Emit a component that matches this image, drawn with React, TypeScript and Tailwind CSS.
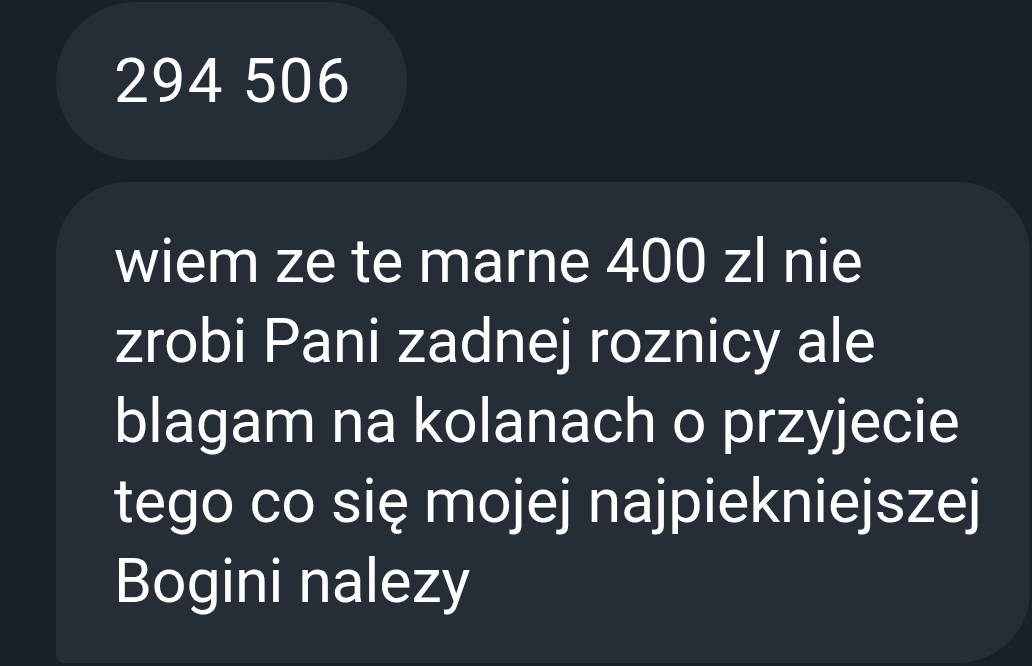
export default function App() {
  const lines = [
    'wiem ze te marne 400 zl nie',
    'zrobi Pani zadnej roznicy ale',
    'blagam na kolanach o przyjecie',
    'tego co się mojej najpiekniejszej',
    'Bogini nalezy',
  ]

  return (
    <div className="w-[1032px] h-[666px] overflow-hidden bg-[#18202a] pl-[56px] pt-[2px] font-['Roboto',sans-serif] text-white">
      {/* short message */}
      <div className="inline-flex h-[158px] items-center rounded-full bg-[#252d36] pl-[58px] pr-[55px]">
        <span className="text-[62px] leading-none tracking-[2px]">294 506</span>
      </div>

      {/* long message */}
      <div className="mt-[22px] w-[974px] rounded-t-[72px] rounded-br-[72px] rounded-bl-[8px] bg-[#252d36] pl-[58px] pt-[39px] pb-[42px]">
        {lines.map((l) => (
          <p key={l} className="text-[61px] leading-[80px] whitespace-nowrap tracking-[-0.2px]">
            {l}
          </p>
        ))}
      </div>
    </div>
  )
}
